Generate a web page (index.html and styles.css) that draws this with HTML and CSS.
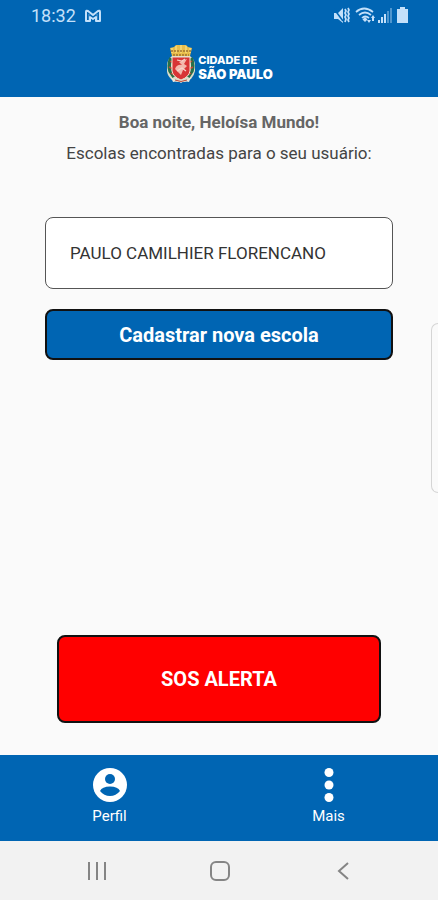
FILE: index.html
```html
<!DOCTYPE html>
<html lang="pt-BR">
<head>
<meta charset="utf-8">
<meta name="viewport" content="width=device-width, initial-scale=1">
<title>Cidade de São Paulo</title>
<link rel="stylesheet" href="styles.css">
</head>
<body>
<header class="header">
  <div class="status">
    <time class="clock">18:32</time>
    <svg class="mail" width="18" height="14" viewBox="0 0 18 14" aria-hidden="true">
      <path d="M2 12V3Q2 1 4 2L9 6L14 2Q16 1 16 3V12H12V8L9 10L6 8V12Z" fill="none" stroke="currentColor" stroke-width="2" stroke-linejoin="round"/>
      <path d="M5 5V11M13 5V11" fill="none" stroke="currentColor" stroke-width="1" opacity=".5"/>
    </svg>
    <svg class="signals" width="75" height="18" viewBox="0 0 75 18" aria-hidden="true">
      <g fill="currentColor">
        <path d="M0 6H4L9 1V16L4 12H0Z"/>
        <path d="M64 2H66V0H71V2H74V16H63V2Z"/>
        <path d="M44 13h2v3h-2zM47 10h2v6h-2zM50 7h2v9h-2z"/>
        <path d="M53 4h2v12h-2zM56 1h2v15h-2z" opacity=".4"/>
        <path d="M31 10L33.500 12.500L31 15L28.500 12.500Z"/>
        <path d="M33 13h4l-2 3zM37 11h4l-2-3zM38 11h2v3h-2z"/>
      </g>
      <path d="M0 2L9 14" stroke="#0065b3" stroke-width="1.500"/>
      <g fill="none" stroke="currentColor" stroke-width="1.700">
        <path d="M11 2L12 4L11 6L12 8L11 10L12 12L11 15M14 1L15 3L14 5L15 7L14 9L15 11L14 13L15 15"/>
        <path d="M22 5Q30 -2 39 5M25 8Q31 3 37 8M28 11Q31 8 35 11"/>
      </g>
    </svg>
  </div>
  <div class="brand">
    <svg width="28" height="40" viewBox="0 0 28 40" aria-hidden="true">
      <path d="M5 12L3 4L7 3L9 1H19L21 3L25 4L23 12Z" fill="#e9bd4b"/>
      <path d="M5 4V9M9 2V9M14 1V9M19 2V9M23 4V9" stroke="#f7dc78" stroke-width="1.500"/>
      <path d="M4 7H24M6 11H22" stroke="#9d7332" stroke-width="1.500" stroke-dasharray="2 1"/>
      <path d="M5 12Q-1 17 0 24Q-1 31 5 36L10 38H18L24 35Q29 29 28 23Q29 17 23 12Z" fill="#d9ddc9"/>
      <path d="M4 14Q1 20 3 27L7 33M24 14Q27 20 25 27L21 33" fill="none" stroke="#26704a" stroke-width="3.500"/>
      <path d="M3 17L6 19M2 23L6 25M4 29L7 31M25 17L22 19M26 23L22 25M24 29L21 31" stroke="#c54636" stroke-width="1.500"/>
      <path d="M5 13H23V27Q22 33 14 36Q6 33 5 27Z" fill="#d83536" stroke="#eee0ce"/>
      <path d="M8 25Q10 20 15 21L12 18L20 15L17 20L20 22L16 26L14 31Z" fill="#f3b8ad"/>
      <path d="M10 16L15 17L18 15M10 27L15 24L19 27" fill="none" stroke="#f6d5cd" stroke-width="1.200"/>
      <path d="M4 33Q14 42 24 33L22 38L17 37L14 39L11 37L6 38Z" fill="#eee8db"/>
      <path d="M8 36Q14 39 20 36" fill="none" stroke="#c04536"/>
    </svg>
    <p class="wordmark"><span>CIDADE DE</span><strong>SÃO PAULO</strong></p>
  </div>
</header>

<main class="main">
  <h1 class="greeting">Boa noite, Heloísa Mundo!</h1>
  <p class="intro">Escolas encontradas para o seu usuário:</p>
  <div class="schools">
    <button class="school" type="button">PAULO CAMILHIER FLORENCANO</button>
    <button class="add" type="button">Cadastrar nova escola</button>
  </div>
  <button class="sos" type="button">SOS ALERTA</button>
  <div class="edge-panel"></div>
</main>

<nav class="tabs">
  <a class="tab" href="#perfil">
    <svg width="34" height="34" viewBox="0 0 34 34" aria-hidden="true">
      <circle cx="17" cy="17" r="17" fill="#fff"/>
      <circle cx="17" cy="11" r="5" fill="#0065b3"/>
      <path d="M7 23Q9 18.500 17 18.500T27 23Q23 28 17 28T7 23Z" fill="#0065b3"/>
    </svg>
    <span>Perfil</span>
  </a>
  <a class="tab" href="#mais">
    <svg width="34" height="34" viewBox="0 0 34 34" fill="#fff" aria-hidden="true">
      <circle cx="17" cy="4.500" r="4.500"/><circle cx="17" cy="17" r="4.500"/><circle cx="17" cy="29.500" r="4.500"/>
    </svg>
    <span>Mais</span>
  </a>
</nav>

<nav class="system">
  <button type="button" aria-label="Recentes"><svg width="20" height="20" viewBox="0 0 20 20"><path d="M2 1V19M10 1V19M18 1V19"/></svg></button>
  <button type="button" aria-label="Início"><svg width="20" height="20" viewBox="0 0 20 20"><rect x="1" y="1" width="18" height="18" rx="5"/></svg></button>
  <button type="button" aria-label="Voltar"><svg width="20" height="20" viewBox="0 0 20 20"><path d="M15 2L6 10L15 18"/></svg></button>
</nav>
</body>
</html>
```
FILE: styles.css
```css
* {
  box-sizing: border-box;
}

body {
  margin: 0;
  min-height: 100vh;
  display: flex;
  flex-direction: column;
  background: #fafafa;
  color: #444;
  font-family: Roboto, "Liberation Sans", sans-serif;
}

button {
  font-family: inherit;
  cursor: pointer;
}

h1,
p {
  margin: 0;
}

svg {
  display: block;
}

.header {
  padding: 4px 29px 13px 31px;
  background: #0065b3;
  color: #fff;
}

.status {
  display: flex;
  align-items: center;
  gap: 8px;
  height: 24px;
  color: #c3e0fa;
}

.clock {
  font-size: 18px;
  line-height: 24px;
}

.signals {
  margin-left: auto;
}

.brand {
  display: flex;
  justify-content: center;
  align-items: center;
  gap: 3px;
  margin-top: 16px;
}

.wordmark {
  display: flex;
  flex-direction: column;
  padding-top: 8px;
  font-family: Inter, Roboto, sans-serif;
  font-size: 11px;
  font-weight: 800;
  line-height: 12px;
}

.wordmark strong {
  font-size: 13px;
  font-weight: 900;
  line-height: 16px;
}

.main {
  position: relative;
  flex: 1;
  display: flex;
  flex-direction: column;
  padding: 13px 45px 32px;
  text-align: center;
}

.greeting {
  color: #666;
  font-size: 17px;
  font-weight: 700;
  line-height: 24px;
}

.intro {
  margin-top: 7px;
  font-size: 17px;
  line-height: 24px;
}

.schools {
  display: grid;
  gap: 20px;
  margin-top: 52px;
}

.school {
  height: 72px;
  padding: 0 24px;
  border: 1px solid #555;
  border-radius: 8px;
  background: #fff;
  color: #333;
  font-size: 17px;
  text-align: left;
}

.add,
.sos {
  border: 2px solid #111;
  border-radius: 8px;
  color: #fff;
  font-size: 20px;
  font-weight: 700;
}

.add {
  height: 51px;
  background: #0065b3;
}

.sos {
  height: 88px;
  margin: auto 12px 0;
  background: #f00;
}

.edge-panel {
  position: absolute;
  top: 226px;
  right: 0;
  width: 7px;
  height: 170px;
  border: 1px solid #d5d5d5;
  border-right: 0;
  border-radius: 7px 0 0 7px;
}

.tabs {
  display: grid;
  grid-template-columns: 1fr 1fr;
  padding: 13px 0 15px;
  background: #0065b3;
}

.tab {
  display: flex;
  flex-direction: column;
  align-items: center;
  gap: 4px;
  color: #fff;
  font-size: 15px;
  line-height: 20px;
  text-decoration: none;
}

.system {
  display: grid;
  grid-template-columns: repeat(3, 1fr);
  padding: 0 34px 0 36px;
  background: #f2f2f2;
}

.system button {
  display: grid;
  place-items: center;
  height: 59px;
  padding: 0;
  border: 0;
  background: none;
}

.system svg {
  fill: none;
  stroke: #858585;
  stroke-width: 2;
}
```
